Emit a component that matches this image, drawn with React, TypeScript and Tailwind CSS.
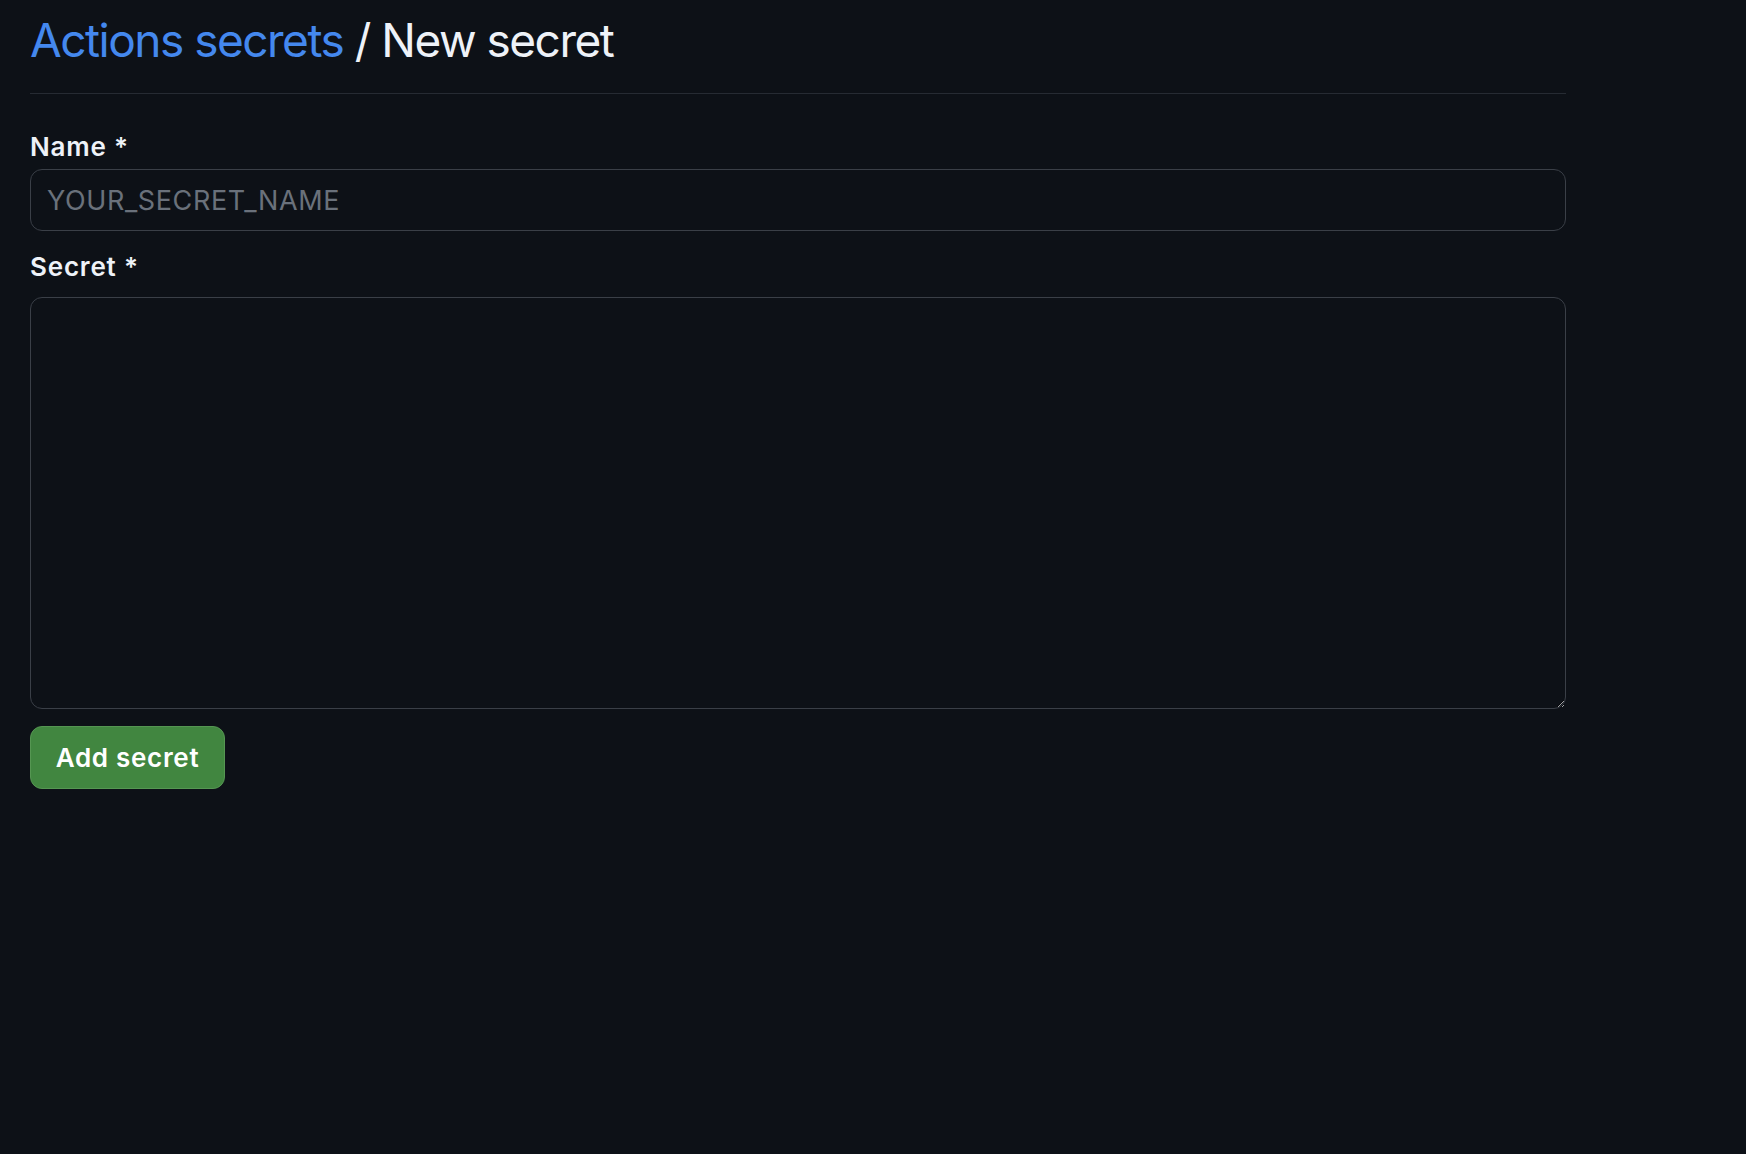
import React from 'react';

const App: React.FC = () => {
    return (
        <div className="min-h-screen w-full bg-[#0d1117] font-['Inter','Noto_Sans',sans-serif] [color-scheme:dark]">
            <div className="w-[1536px] ml-[30px]">
                <div className="pt-[11px] pb-[24px] border-b border-[#262b33]">
                    <h2 className="text-[46px] leading-[58px] font-normal tracking-[-1.5px]">
                        <a href="#" className="text-[#4488ee]">Actions secrets</a>
                        <span className="text-[#eef2f8]"> / New secret</span>
                    </h2>
                </div>

                <form className="flex flex-col" onSubmit={e => e.preventDefault()}>
                    <label htmlFor="secret_name" className="mt-[34px] mb-[3px] text-[26px] leading-[38px] font-semibold tracking-[0.8px] text-[#eef2f8]">
                        Name *
                    </label>
                    <input
                        id="secret_name"
                        type="text"
                        placeholder="YOUR_SECRET_NAME"
                        className="h-[62px] w-full rounded-[12px] border border-[#3a3f47] bg-[#0d1117] px-4 text-[27px] tracking-[0.6px] text-[#eef2f8] placeholder:text-[#6a717b] outline-none"
                    />

                    <label htmlFor="secret_value" className="mt-[17px] mb-[11px] text-[26px] leading-[38px] font-semibold tracking-[0.8px] text-[#eef2f8]">
                        Secret *
                    </label>
                    <textarea
                        id="secret_value"
                        className="h-[412px] w-full rounded-[12px] border border-[#3a3f47] bg-[#0d1117] px-4 py-3 text-[26px] text-[#eef2f8] outline-none resize-y"
                    />

                    <div className="mt-[17px]">
                        <button
                            type="submit"
                            className="h-[63px] w-[195px] rounded-[12px] border border-[#559652] bg-[#418640] text-[26px] font-semibold tracking-[0.7px] text-white"
                        >
                            Add secret
                        </button>
                    </div>
                </form>
            </div>
        </div>
    );
};

export default App;
